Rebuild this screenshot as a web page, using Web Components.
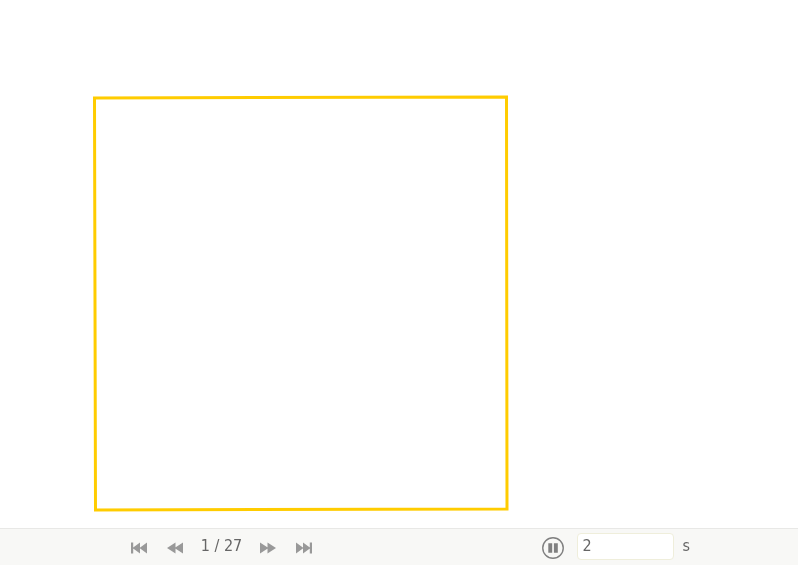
<!DOCTYPE html>
<html><head><meta charset="utf-8"><style>
html,body{margin:0;height:100%;background:#fff;overflow:hidden}
body{display:flex;flex-direction:column;font-family:"DejaVu Sans",sans-serif}
</style></head><body>
<stage-view></stage-view>
<player-bar></player-bar>
<script>
class StageView extends HTMLElement{constructor(){super();this.attachShadow({mode:'open'}).innerHTML=`<style>:host{display:block;flex:1;min-height:0}svg{display:block;width:100%;height:100%}</style>
<svg viewBox="0 0 798 528"><polygon points="94.5,98 506.5,97 507,509 95.5,510" fill="#fff" stroke="#ffcc00" stroke-width="3"/></svg>`}}
customElements.define('stage-view',StageView);
const paths={
first:'<path d="M1 1.5h2.2v11H1zM2.5 7l7.5-5.5v11zM9.5 7L17 1.5v11z"/>',
prev:'<path d="M1 7l8.5-5.5v11zM8.5 7L17 1.5v11z"/>',
next:'<path d="M1 1.5L9.5 7 1 12.5zM8.5 1.5L17 7l-8.5 5.5z"/>',
last:'<path d="M1 1.5L8.5 7 1 12.5zM8 1.5L15.5 7 8 12.5zM14.8 1.5H17v11h-2.2z"/>'};
class NavIcon extends HTMLElement{connectedCallback(){if(this.shadowRoot)return;this.attachShadow({mode:'open'}).innerHTML=`<style>:host{display:block;width:18px;height:14px}svg{display:block}</style><svg width="18" height="14" viewBox="0 0 18 14" fill="#999">${paths[this.getAttribute('name')]}</svg>`}}
customElements.define('nav-icon',NavIcon);
class PlayerBar extends HTMLElement{constructor(){super();this.attachShadow({mode:'open'}).innerHTML=`<style>
:host{display:flex;align-items:center;height:37px;box-sizing:border-box;border-top:1px solid #e8e8e6;background:#f8f8f6;color:#666;font:16px "DejaVu Sans",sans-serif;font-stretch:condensed;padding-left:130px;flex:none}
.pager{display:flex;align-items:center;margin-top:2px}
.count{width:75px;text-align:center;margin-top:-3px;will-change:opacity}
nav-icon+nav-icon{margin-left:18px}
.p{margin-left:228px;margin-top:2px;display:block}
.input{margin-left:12px;width:97px;height:27px;box-sizing:border-box;border:1px solid #efeedb;border-radius:4px;background:#fff;padding:2px 5px 2px 4.5px;line-height:20px;color:#666;margin-top:-1px}
.input span{will-change:opacity;display:block}
.u{margin-left:8.5px;margin-top:-3px;will-change:opacity}
</style>
<div class="pager"><nav-icon name="first"></nav-icon><nav-icon name="prev"></nav-icon></div>
<span class="count">1 / 27</span>
<div class="pager"><nav-icon name="next"></nav-icon><nav-icon name="last"></nav-icon></div>
<svg class="p" width="24" height="24" viewBox="0 0 24 24"><circle cx="12" cy="12" r="10.25" fill="none" stroke="#808080" stroke-width="1.4"/><path d="M7.3 7.2h3.9v9.6H7.3zM12.9 7.2h3.9v9.6h-3.9z" fill="#808080"/></svg>
<div class="input"><span>2</span></div><span class="u">s</span>`}}
customElements.define('player-bar',PlayerBar);
</script></body></html>
